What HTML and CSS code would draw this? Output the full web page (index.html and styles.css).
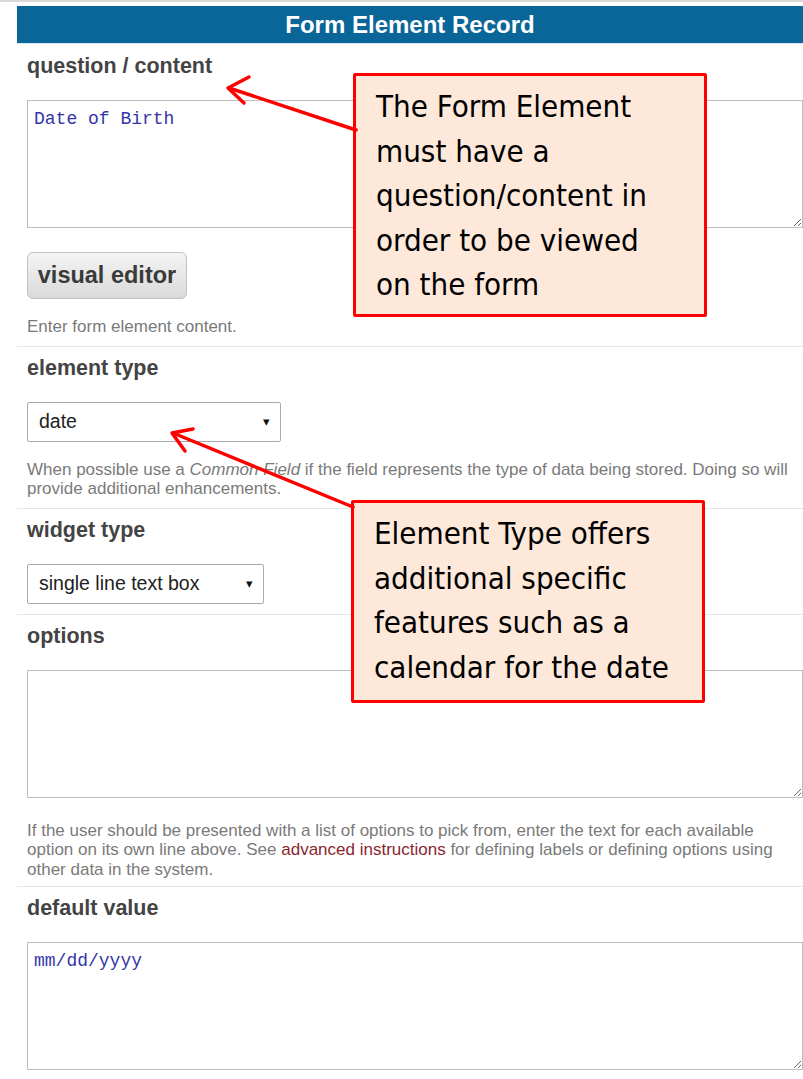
FILE: index.html
```html
<!DOCTYPE html>
<html lang="en">
<head>
<meta charset="utf-8">
<title>Form Element Record</title>
<link rel="stylesheet" href="styles.css">
</head>
<body>
<div class="topline"></div>
<main class="page">
  <section class="record">
    <h1 class="record-head">Form Element Record</h1>

    <div class="field first">
      <div class="label">question / content</div>
      <textarea class="area" readonly>Date of Birth</textarea>
      <button class="btn" type="button">visual editor</button>
      <p class="help">Enter form element content.</p>
    </div>

    <div class="field">
      <div class="label">element type</div>
      <div class="select w-type"><span>date</span><span class="caret">&#9662;</span></div>
      <p class="help">When possible use a <em>Common Field</em> if the field represents the type of data being stored. Doing so will provide additional enhancements.</p>
    </div>

    <div class="field tight">
      <div class="label">widget type</div>
      <div class="select w-widget"><span>single line text box</span><span class="caret">&#9662;</span></div>
    </div>

    <div class="field short">
      <div class="label">options</div>
      <textarea class="area" readonly></textarea>
      <p class="help after-area">If the user should be presented with a list of options to pick from, enter the text for each available option on its own line above. See <a href="#" class="link">advanced instructions</a> for defining labels or defining options using other data in the system.</p>
    </div>

    <div class="field last">
      <div class="label">default value</div>
      <textarea class="area" readonly>mm/dd/yyyy</textarea>
    </div>
  </section>

  <div class="callout c1">The Form Element must have a question/content in order to be viewed on the form</div>
  <div class="callout c2">Element Type offers additional specific features such as a calendar for the date</div>

  <svg class="arrows" width="803" height="1079" viewBox="0 0 803 1079" aria-hidden="true">
    <g fill="none" stroke="#ff0000" stroke-width="3.5" stroke-linecap="round" stroke-linejoin="round">
      <line x1="356" y1="130" x2="229" y2="88"/>
      <polyline points="249,77 228,88 244,103"/>
      <line x1="353" y1="507" x2="173" y2="433"/>
      <polyline points="193,429 172,433 185,451"/>
    </g>
  </svg>
</main>
</body>
</html>
```

FILE: styles.css
```css
* { box-sizing: border-box; }

html, body {
  margin: 0;
  padding: 0;
  background: #ffffff;
}

body {
  font-family: "Liberation Sans", Arial, sans-serif;
  color: #444;
  width: 803px;
  height: 1079px;
  overflow: hidden;
}

.topline {
  height: 2px;
  background: #d9d9d9;
  margin-bottom: 4px;
}

.page {
  position: relative;
  padding-left: 17px;
}

.record-head {
  margin: 0;
  height: 38px;
  line-height: 38px;
  background: #0a6598;
  color: #fff;
  text-align: center;
  font-size: 24px;
  font-weight: bold;
  border-bottom: 1px solid #dfe9f1;
}

.field {
  padding: 9px 0 9px 10px;
  border-bottom: 1px solid #e6e6e6;
}
.field.first { padding-top: 10px; }
.field.tight { padding-bottom: 10px; }
.field.short { padding-bottom: 7px; }
.field.last { border-bottom: none; }

.label {
  font-size: 21.5px;
  font-weight: bold;
  line-height: 24px;
  color: #444;
  margin-bottom: 22px;
}

.area {
  display: block;
  width: 100%;
  height: 128px;
  margin: 0;
  padding: 8px 6px;
  border: 1px solid #bdbdbd;
  border-radius: 0;
  background: #fff;
  font-family: "Liberation Mono", "DejaVu Sans Mono", monospace;
  font-size: 18px;
  line-height: 20px;
  color: #3535a8;
  resize: vertical;
  outline: none;
}

.btn {
  display: block;
  margin-top: 24px;
  width: 160px;
  height: 47px;
  padding: 0;
  border: 1px solid #c2c2c2;
  border-radius: 6px;
  background: linear-gradient(#f4f4f4, #dadada);
  font-family: "Liberation Sans", Arial, sans-serif;
  font-size: 23.5px;
  font-weight: bold;
  color: #3a3a3a;
}

.help {
  margin: 18px 0 0;
  font-size: 17px;
  line-height: 19.5px;
  color: #7a7a7a;
}
.help.after-area { margin-top: 23px; }
.help em { font-style: italic; }

.link {
  color: #8a1f2e;
  text-decoration: none;
}

.select {
  display: flex;
  align-items: center;
  justify-content: space-between;
  height: 40px;
  padding: 0 10px 0 11px;
  border: 1px solid #a9a9a9;
  border-radius: 2px;
  background: #fff;
  font-size: 19.5px;
  color: #222;
}
.w-type { width: 254px; }
.w-widget { width: 237px; }

.caret {
  font-size: 13px;
  color: #111;
}

.callout {
  position: absolute;
  width: 354px;
  background: #fde8da;
  border: 3px solid #ff0000;
  border-radius: 2px;
  padding: 8px 28px 0 20px;
  font-family: "DejaVu Sans Condensed", "DejaVu Sans", sans-serif;
  font-size: 31px;
  line-height: 44.5px;
  color: #000;
}
.c1 { left: 353px; top: 67px; height: 244px; }
.c2 { left: 351px; top: 494px; height: 203px; }

.arrows {
  position: absolute;
  left: 0;
  top: -6px;
  pointer-events: none;
}
```
